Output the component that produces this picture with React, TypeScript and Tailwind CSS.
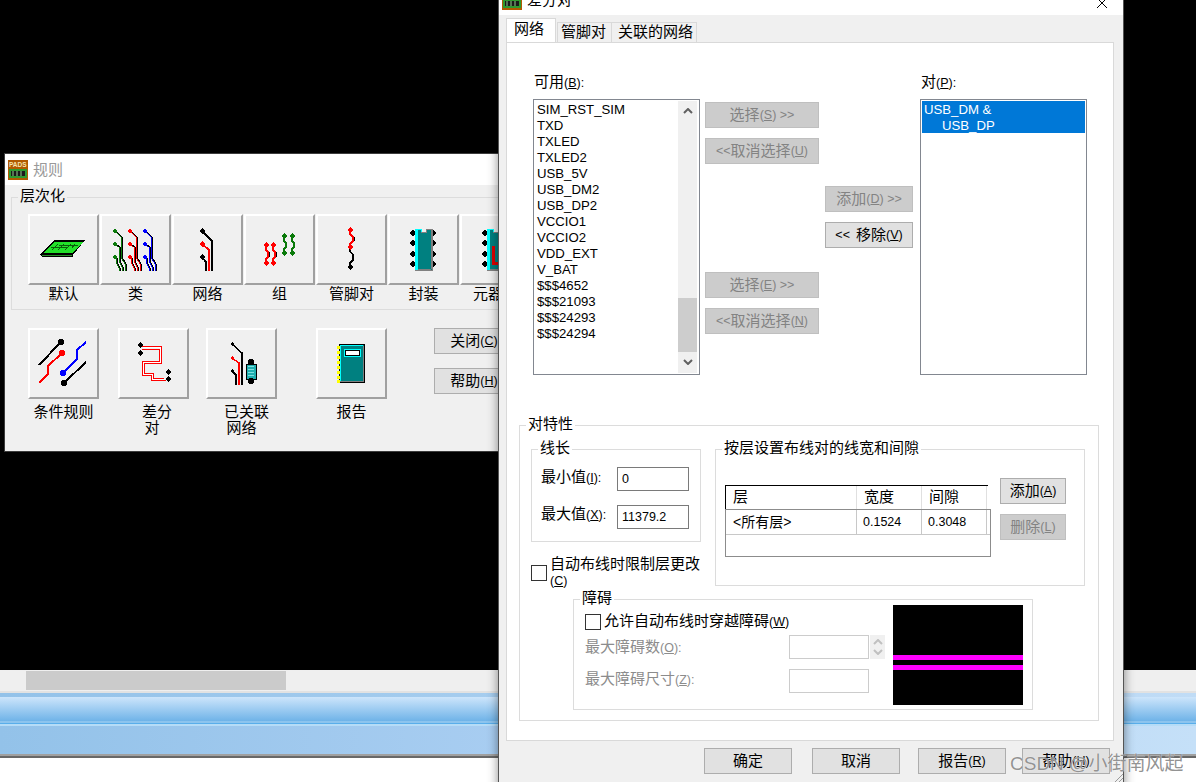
import React from "react";

const netItems = [
  "SIM_RST_SIM", "TXD", "TXLED", "TXLED2", "USB_5V", "USB_DM2", "USB_DP2", "VCCIO1",
  "VCCIO2", "VDD_EXT", "V_BAT", "$$$4652", "$$$21093", "$$$24293", "$$$24294",
];

// mnemonic in the smaller latin size, e.g. (S)
const Mn = ({ k, after }: { k: string; after?: string }) => (
  <span className="text-[12.5px]">
    (<u>{k}</u>){after}
  </span>
);

const Btn = ({ children, disabled, className }: { children: React.ReactNode; disabled?: boolean; className: string }) => (
  <div
    className={`${className} flex h-[26px] shrink-0 items-center justify-center whitespace-nowrap border pb-px ${
      disabled ? "border-[#bfbfbf] bg-[#cccccc] text-[#838383]" : "border-[#adadad] bg-[#e1e1e1] text-black"
    }`}
  >
    {children}
  </div>
);

const Group = ({ label, className, children }: { label: string; className: string; children: React.ReactNode }) => (
  <div className={`${className} relative shrink-0 border border-[#dcdcdc]`}>
    <span className="absolute left-[6px] top-[-10px] whitespace-nowrap bg-inherit px-[2px]">{label}</span>
    {children}
  </div>
);

const Pad = ({ x, y, c = "#000", r = 3 }: { x: number; y: number; c?: string; r?: number }) => (
  <polygon points={`${x - r},${y} ${x},${y - r} ${x + r},${y} ${x},${y + r}`} fill={c} />
);

const IconFrame = ({ children }: { children: React.ReactNode }) => (
  <svg width="67" height="67" viewBox="2 2 67 67" shapeRendering="crispEdges" fill="none">
    {children}
  </svg>
);

const Traces = ({ c, dx }: { c: string; dx: number }) => (
  <g transform={`translate(${dx} 0)`}>
    <path d="M1 18 L6 23 V43 L10 50 V57" stroke={c} />
    <path d="M2 18 L7 23 V43 L11 50 V57" stroke="#000" />
    <path d="M1 31 L4 33 V47 L7 53 V57" stroke={c} />
    <path d="M2 31 L5 33 V47 L8 53 V57" stroke="#000" />
    <path d="M1 44 V48 L4 54 V57" stroke={c} />
    <path d="M2 44 V48 L5 54 V57" stroke="#000" />
    <Pad x={0} y={17} c={c} r={2.500} />
    <Pad x={0} y={30} c={c} r={2.500} />
    <Pad x={0} y={43} c={c} r={2.500} />
  </g>
);

const Chip = () => (
  <g>
    {[19, 29, 40, 50].map((y) => (
      <g key={y}>
        <Pad x={25} y={y} r={3.500} />
        <Pad x={45} y={y} r={3.500} />
      </g>
    ))}
    <path d="M27 15 H33 V18 H38 V15 H44 V56 H27 Z" fill="#008080" stroke="#808080" />
    <path d="M27 15 V56 M28 16 V56 M29 16 V56 M27 15 H33 V18" stroke="#00ffff" />
    <path d="M43 16 V55 M30 55 H43" stroke="#808080" />
  </g>
);

const icons: Record<string, React.ReactNode> = {
  board: (
    <IconFrame>
      <path d="M12 41 L26 26 H57 L45 41 V43 H14 Z" fill="#000" />
      <path d="M15 39 L27 28 H55 L44 39 Z" fill="#22e02a" />
      <path d="M14 41 H44 V42 H14 Z" fill="#2a8a2a" />
      <path d="M24 36 L30 30 M30 36 L36 30 M37 36 L43 30 M44 34 L47 30 M23 33 H40 M31 31 H50" stroke="#0a5a0a" />
    </IconFrame>
  ),
  cls: (
    <IconFrame>
      <Traces c="#0a7a0a" dx={15} />
      <Traces c="#ff0000" dx={30} />
      <Traces c="#0000ff" dx={45} />
    </IconFrame>
  ),
  net: (
    <IconFrame>
      <path d="M30 17 L40 27 V57" stroke="#000" strokeWidth="2" />
      <path d="M30 30 L37 36 V57" stroke="#ff0000" strokeWidth="2" />
      <path d="M30 43 L34 48 V57" stroke="#000" strokeWidth="2" />
      <Pad x={30} y={17} />
      <Pad x={30} y={30} c="#ff0000" />
      <Pad x={30} y={43} />
    </IconFrame>
  ),
  group: (
    <IconFrame>
      <path d="M22 31 V36 L24 38 V43 L22 45 V49 M29 31 V36 L31 38 V43 L29 45 V49" stroke="#ff0000" strokeWidth="1.500" />
      <path d="M25 38 V43 M32 38 V43" stroke="#000" />
      <path d="M40 22 V27 L42 29 V33 L40 35 V39 M48 22 V27 L50 29 V33 L48 35 V39" stroke="#0a7a0a" strokeWidth="1.500" />
      {[22, 29].map((x) => (
        <g key={x}>
          <Pad x={x} y={31} c="#ff0000" />
          <Pad x={x} y={49} c="#ff0000" />
        </g>
      ))}
      {[40, 48].map((x) => (
        <g key={x}>
          <Pad x={x} y={22} c="#0a7a0a" />
          <Pad x={x} y={39} c="#0a7a0a" />
        </g>
      ))}
    </IconFrame>
  ),
  pair: (
    <IconFrame>
      <path d="M34 16 V20 L37 23 V27 L34 30 V33" stroke="#ff0000" strokeWidth="1.500" />
      <path d="M38 23 V27" stroke="#000" />
      <path d="M34 33 V37 L37 41 V46 L34 49 V53" stroke="#000" strokeWidth="1.500" />
      <Pad x={34} y={16} c="#ff0000" />
      <Pad x={34} y={33} c="#ff0000" />
      <Pad x={34} y={53} />
    </IconFrame>
  ),
  chip: (
    <IconFrame>
      <Chip />
    </IconFrame>
  ),
  part: (
    <IconFrame>
      <Chip />
      <path d="M33 32 V49 H40 V34" stroke="#e00000" strokeWidth="3" />
    </IconFrame>
  ),
  cond: (
    <IconFrame>
      <path d="M11 37 L33 14" stroke="#000" strokeWidth="2" />
      <path d="M11 55 L20 46 V38 L34 25" stroke="#ff0000" strokeWidth="2" />
      <path d="M35 45 L49 31 V22 L58 14" stroke="#0000ff" strokeWidth="2" />
      <path d="M36 55 L58 34" stroke="#000" strokeWidth="2" />
      <circle cx="33" cy="14" r="3" fill="#000" />
      <circle cx="34" cy="25" r="3" fill="#ff0000" />
      <circle cx="35" cy="45" r="3" fill="#0000ff" />
      <circle cx="36" cy="55" r="3" fill="#000" />
    </IconFrame>
  ),
  diff: (
    <IconFrame>
      <path d="M24 18 H43 V35 H26 V45 H35 V50 H46" stroke="#ff0000" />
      <path d="M24 21 H41 V33 H24 V47 H33 V52 H48" stroke="#ff0000" />
      <path d="M25 19.500 H42 V34 H25 V46 H34 V51 H47" stroke="#ffffff" />
      <Pad x={22} y={17} />
      <Pad x={22} y={25} />
      <Pad x={50} y={44} />
      <Pad x={50} y={51} />
    </IconFrame>
  ),
  linked: (
    <IconFrame>
      <path d="M26 16 L36 25 V57" stroke="#000" strokeWidth="1.500" />
      <path d="M26 30 L33 35 V57" stroke="#ff0000" strokeWidth="1.500" />
      <path d="M26 43 L30 47 V57" stroke="#000" strokeWidth="1.500" />
      <Pad x={26} y={16} r={2} />
      <Pad x={26} y={30} c="#ff0000" r={2} />
      <Pad x={26} y={43} r={2} />
      <rect x="40" y="36" width="10" height="15" fill="#20b0b0" stroke="#000" />
      <path d="M42 38 H48 M42 41 H48 M42 44 H48 M42 47 H48" stroke="#7fe0e0" />
      <circle cx="45" cy="34" r="3" fill="#000" />
      <circle cx="45" cy="53" r="3" fill="#000" />
    </IconFrame>
  ),
  report: (
    <IconFrame>
      <rect x="23" y="16" width="25" height="38" fill="#008080" stroke="#000" />
      <path d="M24 17 H47 M24 17 V53" stroke="#00ffff" />
      <path d="M47 18 V53 H24" stroke="#808080" />
      <rect x="28" y="21" width="16" height="7" fill="#fff" stroke="#00ffff" />
      <rect x="29" y="22" width="14" height="5" fill="#fff" stroke="#000" />
      {[18, 23, 28, 33, 38, 43, 48, 52].map((y) => (
        <rect key={y} x="21" y={y} width="3" height="3" fill="#ffff00" />
      ))}
    </IconFrame>
  ),
};

const IconBtn = ({ icon }: { icon: string }) => (
  <div className="h-[71px] w-[71px] shrink-0 border-2 border-b-[#a0a0a0] border-l-white border-r-[#a0a0a0] border-t-white bg-[#f0f0f0]">
    {icons[icon]}
  </div>
);

const topTools = [
  { icon: "board", label: "默认" },
  { icon: "cls", label: "类" },
  { icon: "net", label: "网络" },
  { icon: "group", label: "组" },
  { icon: "pair", label: "管脚对" },
  { icon: "chip", label: "封装" },
  { icon: "part", label: "元器件" },
];

const PadsLogo = () => (
  <svg width="20" height="20" viewBox="0 0 20 20" className="shrink-0">
    <rect width="20" height="20" fill="#b05a00" />
    <text x="1" y="7" fontSize="6.500" fontWeight="700" fill="#f4e4b0" fontFamily="Liberation Sans">
      PADS
    </text>
    <rect x="1" y="9" width="18" height="9" fill="#2e9a2e" />
    <rect x="3" y="11" width="14" height="5" fill="#1a1a1a" />
    <path d="M5 11 V16 M9 11 V16 M13 11 V16" stroke="#8fd08f" />
  </svg>
);

const RulesWindow = () => (
  <div className="absolute left-[4px] top-[153px] h-[299px] w-[530px] overflow-hidden border border-[#3c3c3c] bg-[#f0f0f0]">
    <div className="flex h-[31px] items-center gap-[5px] bg-white pl-[3px] text-[#999999]">
      <PadsLogo />
      <span className="text-[15px]">规则</span>
    </div>
    <div className="pl-[6px] pt-[12px]">
      <Group label="层次化" className="h-[113px] w-[560px] bg-[#f0f0f0]">
        <div className="flex gap-px pl-[16px] pt-[16px]">
          {topTools.map((t) => (
            <div key={t.icon} className="flex w-[71px] shrink-0 flex-col items-center">
              <IconBtn icon={t.icon} />
              <span className="whitespace-nowrap leading-[18px]">{t.label}</span>
            </div>
          ))}
        </div>
      </Group>
    </div>
    <div className="flex items-start pl-[23px] pt-[18px]">
      <div className="flex w-[71px] shrink-0 flex-col items-center">
        <IconBtn icon="cond" />
        <span className="mt-[5px] whitespace-nowrap">条件规则</span>
      </div>
      <div className="ml-[19px] flex w-[71px] shrink-0 flex-col items-center">
        <IconBtn icon="diff" />
        <span className="mt-[5px] pl-[7px]">差分</span>
        <span className="pr-[3px]">对</span>
      </div>
      <div className="ml-[17px] flex w-[71px] shrink-0 flex-col items-center">
        <IconBtn icon="linked" />
        <span className="mt-[5px] whitespace-nowrap pl-[10px]">已关联</span>
        <span>网络</span>
      </div>
      <div className="ml-[39px] flex w-[71px] shrink-0 flex-col items-center">
        <IconBtn icon="report" />
        <span className="mt-[5px]">报告</span>
      </div>
      <div className="ml-[47px] flex flex-col gap-[14px]">
        <Btn className="w-[80px]">
          关闭<Mn k="C" />
        </Btn>
        <Btn className="w-[80px]">
          帮助<Mn k="H" />
        </Btn>
      </div>
    </div>
  </div>
);

const ScrollChevron = ({ down, c = "#606060" }: { down?: boolean; c?: string }) => (
  <svg width="10" height="6" viewBox="0 0 10 6" fill="none">
    <path d={down ? "M1 1 L5 5 L9 1" : "M1 5 L5 1 L9 5"} stroke={c} strokeWidth="2" />
  </svg>
);

const NetList = () => (
  <div className="relative h-[276px] w-[167px] border border-[#828790] bg-white">
    <div className="pl-[3px] pt-[2px] text-[13.2px] text-[#000000]">
      {netItems.map((n) => (
        <div key={n} className="h-[16px] leading-[16px]">
          {n}
        </div>
      ))}
    </div>
    {/* list scrollbar */}
    <div className="absolute bottom-px right-[2px] top-px flex w-[19px] flex-col bg-[#f0f0f0]">
      <div className="flex h-[20px] items-center justify-center">
        <ScrollChevron />
      </div>
      <div className="mt-[177px] h-[54px] bg-[#cdcdcd]" />
      <div className="flex h-[20px] items-center justify-center">
        <ScrollChevron down />
      </div>
    </div>
  </div>
);

const Field = ({ value, disabled }: { value?: string; disabled?: boolean }) => (
  <div
    className={`flex h-[24px] items-center border pl-[4px] text-[12.5px] ${
      disabled ? "w-[80px] border-[#cccccc] bg-white" : "w-[72px] border-[#7a7a7a] bg-white"
    }`}
  >
    {value}
  </div>
);

const Check = () => <div className="h-[16px] w-[16px] shrink-0 border border-[#333333] bg-white" />;

const ClearanceTable = () => (
  <div className="mt-[7px] h-[72px] w-[266px] shrink-0">
    <div className="flex h-[24px] w-[263px] border-l border-t border-black">
      <div className="w-[131px] border-r border-[#e0e0e0] pl-[7px] pt-[3px]">层</div>
      <div className="w-[65px] border-r border-[#e0e0e0] pl-[7px] pt-[3px]">宽度</div>
      <div className="w-[65px] border-r border-[#e0e0e0] pl-[7px] pt-[3px]">间隙</div>
    </div>
    <div className="h-[48px] border border-[#8c8c8c]">
      <div className="flex h-[25px] border-b border-[#c8c8c8] text-[12.5px]">
        <div className="flex w-[131px] items-center border-r border-[#c8c8c8] pl-[7px] text-[14px]">&lt;所有层&gt;</div>
        <div className="flex w-[65px] items-center border-r border-[#c8c8c8] pl-[6px]">0.1524</div>
        <div className="flex w-[65px] items-center border-r border-[#c8c8c8] pl-[6px]">0.3048</div>
      </div>
    </div>
  </div>
);

const DiffPairDialog = () => (
  <div className="absolute left-[498px] top-[-16px] h-[810px] w-[626px] border border-[#555555] bg-[#f0f0f0] shadow-[0_0_10px_rgba(0,0,0,0.45)]">
    <div className="relative flex h-[30px] items-center gap-[5px] bg-white pl-[3px]">
      <PadsLogo />
      <span className="text-[15px]">差分对</span>
      <svg width="12" height="12" viewBox="0 0 12 12" className="absolute left-[597px] top-[12px]" fill="none">
        <path d="M1 1 L11 11 M11 1 L1 11" stroke="#000" />
      </svg>
    </div>
    <div className="pl-[7px]">
      {/* tabs */}
      <div className="flex h-[27px] items-end pt-[4px]">
        <div className="relative z-10 h-[24px] w-[50px] border border-b-0 border-[#d9d9d9] bg-white pl-[7px] pt-[2px]">网络</div>
        <div className="ml-px h-[20px] w-[55px] border border-b-0 border-[#d9d9d9] pl-[3px] pt-px">管脚对</div>
        <div className="h-[20px] w-[85px] border border-b-0 border-l-0 border-[#d9d9d9] pl-[6px] pt-px">关联的网络</div>
      </div>
      <div className="h-[699px] w-[608px] border border-[#d9d9d9] bg-white">
        <div className="flex h-[332px] pl-[26px]">
          <div className="pt-[29px]">
            <div className="mb-[7px] h-[20px] pl-px leading-[20px]">
              可用<Mn k="B" after=":" />
            </div>
            <NetList />
          </div>
          <div className="ml-[5px] flex w-[114px] flex-col pt-[59px]">
            <Btn disabled className="w-[114px]">
              选择<Mn k="S" after=" >>" />
            </Btn>
            <Btn disabled className="mt-[10px] w-[114px]">
              <span className="text-[12.5px]">&lt;&lt;</span>取消选择<Mn k="U" />
            </Btn>
            <Btn disabled className="mt-[108px] w-[114px]">
              选择<Mn k="E" after=" >>" />
            </Btn>
            <Btn disabled className="mt-[10px] w-[114px]">
              <span className="text-[12.5px]">&lt;&lt;</span>取消选择<Mn k="N" />
            </Btn>
          </div>
          <div className="ml-[6px] flex w-[88px] flex-col pt-[143px]">
            <Btn disabled className="w-[88px]">
              添加<Mn k="D" after=" >>" />
            </Btn>
            <Btn className="mt-[10px] w-[88px]">
              <span className="mr-[6px] text-[12.5px]">&lt;&lt;</span>移除<Mn k="V" />
            </Btn>
          </div>
          <div className="ml-[7px] pt-[29px]">
            <div className="mb-[7px] h-[20px] pl-px leading-[20px]">
              对<Mn k="P" after=":" />
            </div>
            <div className="h-[276px] w-[167px] border border-[#828790] bg-white p-px">
              <div className="h-[32px] bg-[#0078d7] pl-[2px] pt-px text-[13.2px] text-white">
                <div className="h-[16px] leading-[16px]">USB_DM &amp;</div>
                <div className="h-[15px] pl-[18px] leading-[16px]">USB_DP</div>
              </div>
            </div>
          </div>
        </div>

        <Group label="对特性" className="ml-[12px] mt-[50px] h-[296px] w-[580px] bg-white">
          <div className="flex h-[170px] items-start pl-[11px] pt-[23px]">
            <div className="w-[170px] shrink-0">
              <Group label="线长" className="h-[93px] w-[170px] bg-white">
                <div className="grid grid-cols-[76px_72px] items-center gap-y-[14px] pl-[9px] pt-[17px]">
                  <span className="mb-[4px]">
                    最小值<Mn k="I" after=":" />
                  </span>
                  <Field value="0" />
                  <span className="mb-[6px]">
                    最大值<Mn k="X" after=":" />
                  </span>
                  <Field value="11379.2" />
                </div>
              </Group>
              <div className="mt-[22px] flex">
                <div className="pt-[1px]">
                  <Check />
                </div>
                <div className="ml-[3px] mt-[-8px] w-[152px] leading-[16px]">
                  <div className="whitespace-nowrap">自动布线时限制层更改</div>
                  <Mn k="C" />
                </div>
              </div>
            </div>
            <Group label="按层设置布线对的线宽和间隙" className="ml-[14px] h-[137px] w-[370px] bg-white">
              <div className="flex pl-[9px] pt-[28px]">
                <ClearanceTable />
                <div className="ml-[9px] flex flex-col gap-[10px]">
                  <Btn className="w-[66px]">
                    添加<Mn k="A" />
                  </Btn>
                  <Btn disabled className="w-[66px]">
                    删除<Mn k="L" />
                  </Btn>
                </div>
              </div>
            </Group>
          </div>
          <Group label="障碍" className="ml-[53px] mt-[3px] h-[111px] w-[460px] bg-white">
            <div className="flex">
              <div className="w-[319px] shrink-0 pl-[11px] pt-[13px]">
                <div className="flex items-center gap-[3px]">
                  <Check />
                  <span>
                    允许自动布线时穿越障碍<Mn k="W" />
                  </span>
                </div>
                <div className="mt-[5px] flex items-center text-[#8c8c8c]">
                  <span className="w-[204px]">
                    最大障碍数<Mn k="O" after=":" />
                  </span>
                  <Field disabled />
                  <div className="ml-px flex h-[24px] w-[15px] flex-col items-center justify-center gap-[4px] bg-[#f0f0f0]">
                    <ScrollChevron c="#c0c0c0" />
                    <ScrollChevron down c="#c0c0c0" />
                  </div>
                </div>
                <div className="mt-[10px] flex items-center text-[#8c8c8c]">
                  <span className="mb-[4px] w-[204px]">
                    最大障碍尺寸<Mn k="Z" after=":" />
                  </span>
                  <Field disabled />
                </div>
              </div>
              {/* pair preview */}
              <svg width="130" height="100" viewBox="0 0 130 100" className="mt-[5px] shrink-0" shapeRendering="crispEdges">
                <rect width="130" height="100" fill="#000" />
                <rect y="50" width="130" height="5" fill="#ff00ff" />
                <rect y="60" width="130" height="5" fill="#ff00ff" />
              </svg>
            </div>
          </Group>
        </Group>
      </div>
      <div className="flex pl-[198px] pt-[7px]">
        <Btn className="w-[88px]">确定</Btn>
        <Btn className="ml-[20px] w-[88px]">取消</Btn>
        <Btn className="ml-[18px] w-[88px]">
          报告<Mn k="R" />
        </Btn>
        <Btn className="ml-[16px] w-[88px]">
          帮助<Mn k="H" />
        </Btn>
      </div>
    </div>
  </div>
);

export default function App() {
  return (
    <div className="relative flex h-[782px] w-[1196px] flex-col overflow-hidden bg-black font-['Liberation_Sans','Noto_Sans_CJK_SC',sans-serif] text-[15px] leading-[16px] text-black">
      <div className="h-[670px] shrink-0" />
      {/* background app strip */}
      <div className="h-[21px] shrink-0 bg-[#efefef] pl-[26px] pt-px">
        <div className="h-[19px] w-[260px] bg-[#cbcbcb]" />
      </div>
      <div className="h-[2px] shrink-0 bg-[#e2e2e2]" />
      <div className="h-[4px] shrink-0 bg-[linear-gradient(to_right,#93c2e9,#c0dcf6)]" />
      <div className="h-[24px] shrink-0 bg-[linear-gradient(to_bottom,#cde5fb,#6fb3e8)]" />
      <div className="h-[2px] shrink-0 bg-[#8cc4ee]" />
      <div className="h-px shrink-0 bg-[#59aeea]" />
      <div className="h-[2px] shrink-0 bg-[#b5dcf7]" />
      <div className="h-[28px] shrink-0 bg-[linear-gradient(to_right,#93c2e9,#a8cdf1_42%,#c5e0f8)]" />
      <div className="h-[2px] shrink-0 bg-[#a0a0a0]" />
      <div className="h-[2px] shrink-0 bg-[#686868]" />
      <div className="flex-1 bg-white" />

      <RulesWindow />
      <DiffPairDialog />

      <svg width="8" height="8" viewBox="0 0 8 8" className="absolute left-[1115px] top-[774px]" fill="none">
        <path d="M0 8 L8 0 M4 8 L8 4" stroke="#9a9a9a" />
      </svg>
      <span className="absolute left-[1010px] top-[753px] whitespace-nowrap text-[19px] leading-[22px] text-[#808080]/85 [text-shadow:0_0_1px_#ffffff]">
        CSDN @小街南风起
      </span>
    </div>
  );
}
